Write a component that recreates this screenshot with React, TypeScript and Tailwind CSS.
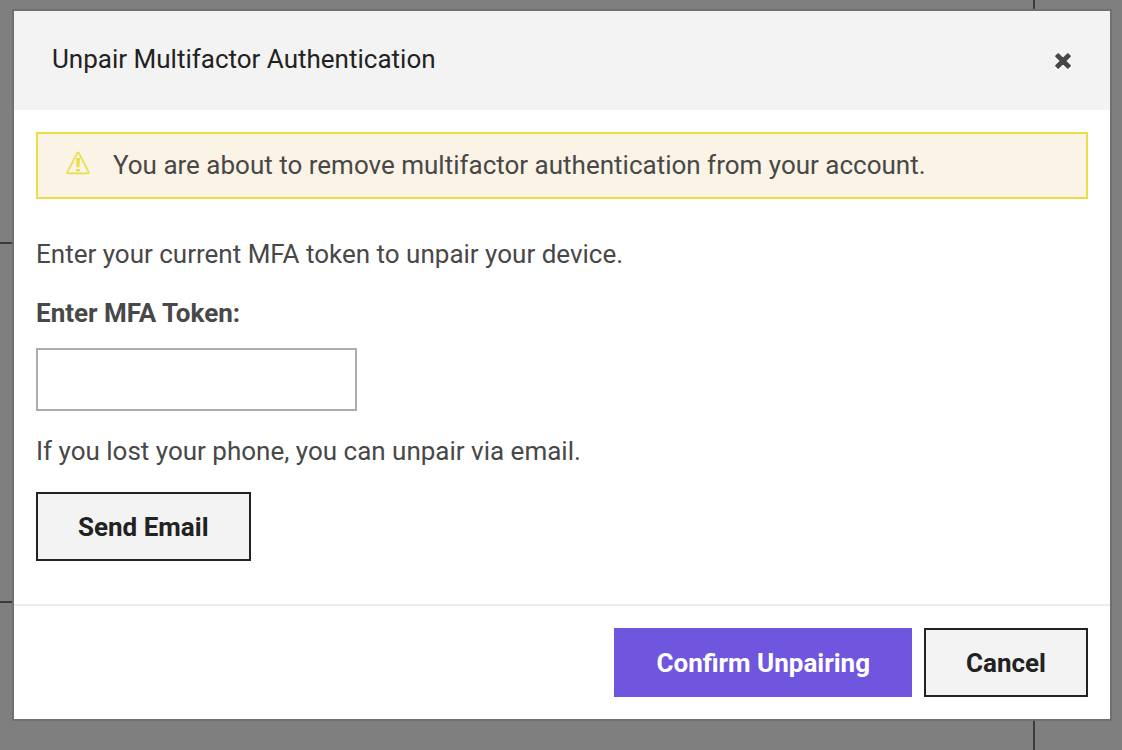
import React, { useState } from "react";

export default function App() {
  const [token, setToken] = useState("");

  return (
    <div className="relative min-h-screen overflow-hidden bg-[#7f7f7f] pt-[9px] pr-2.5 pl-3 font-[Roboto,sans-serif] text-[#484848]">
      <div className="absolute inset-y-0 right-[87px] w-0.5 bg-[#3a3a3a]" />
      <div className="absolute top-[242px] left-0 h-0.5 w-1/2 bg-[#3a3a3a]" />
      <div className="absolute top-[601px] left-0 h-0.5 w-1/2 bg-[#3a3a3a]" />
      <div
        role="dialog"
        aria-labelledby="dialog-title"
        className="relative border-2 border-[#707070] bg-white text-[26px] leading-8"
      >
        <header className="flex items-end justify-between bg-[#f3f3f3] pt-8 pr-[33px] pb-[35px] pl-[38px] text-[#222222]">
          <h1 id="dialog-title">Unpair Multifactor Authentication</h1>
          <button type="button" aria-label="Close" className="p-1.5">
            <svg
              viewBox="0 0 16 16"
              className="size-4 fill-[#484848] stroke-[#484848] drop-shadow-[0_2px_0_#ffffff]"
              strokeWidth="2"
              strokeLinejoin="round"
            >
              <path d="M3.2 1.2 8 6l4.8-4.8 2 2L10 8l4.8 4.8-2 2L8 10l-4.8 4.8-2-2L6 8 1.2 3.2z" />
            </svg>
          </button>
        </header>
        <main className="px-[22px] pt-[22px] pb-[43px]">
          <div role="alert" className="flex items-start border-2 border-[#e8de48] bg-[#faf3e6] px-7 pt-[15px] pb-4">
            <svg viewBox="0 0 24 24" className="mt-0.5 mr-[23px] size-6 shrink-0" aria-hidden="true">
              <path
                d="M11.3 1.8q.7-1 1.4 0L22.7 21.2q.3 1.2-.8 1.2H2.1q-1.1 0-.8-1.2z"
                className="fill-none stroke-[#e8de48]"
                strokeWidth="1.7"
              />
              <path d="M10 7h4l-.6 9.3h-2.8zM10.2 18h3.6v2.4h-3.6z" className="fill-[#e8de48]" />
            </svg>
            <p>You are about to remove multifactor authentication from your account.</p>
          </div>
          <p className="mt-[39px]">Enter your current MFA token to unpair your device.</p>
          <label htmlFor="token" className="mt-[27px] block font-bold">Enter MFA Token:</label>
          <input
            id="token"
            value={token}
            onChange={(e) => setToken(e.target.value)}
            autoComplete="one-time-code"
            className="mt-[19px] block h-[63px] w-[321px] border-2 border-[#adadad] bg-white px-4 outline-none"
          />
          <p className="mt-6">If you lost your phone, you can unpair via email.</p>
          <button type="button" className="mt-[25px] block border-2 border-[#222222] bg-[#f3f3f3] px-10 pt-[17px] pb-4 font-bold text-[#222222]">
            Send Email
          </button>
        </main>
        <footer className="flex justify-end gap-3 border-t-2 border-[#ebebf2] p-[22px] font-bold">
          <button type="button" className="border-2 border-[#7055df] bg-[#7055df] px-10 pt-[17px] pb-4 text-white">
            Confirm Unpairing
          </button>
          <button type="button" className="border-2 border-[#222222] bg-[#f3f3f3] px-10 pt-[17px] pb-4 text-[#222222]">
            Cancel
          </button>
        </footer>
      </div>
    </div>
  );
}
